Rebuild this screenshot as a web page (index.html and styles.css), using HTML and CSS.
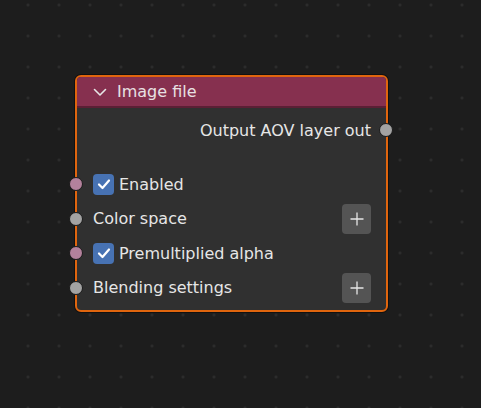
FILE: index.html
```html
<!DOCTYPE html>
<html>
<head>
<meta charset="utf-8">
<link rel="stylesheet" href="styles.css">
</head>
<body>
<div class="canvas">
  <div class="node">
    <div class="header">
      <svg class="chevron" width="14" height="9" viewBox="0 0 14 9"><path d="M1.5 1.5 L7 7 L12.5 1.5" fill="none" stroke="#e6e6e6" stroke-width="1.6" stroke-linecap="round" stroke-linejoin="round"/></svg>
      <span class="title">Image file</span>
    </div>
    <div class="body">
      <div class="row out">
        <span class="label">Output AOV layer out</span>
        <span class="socket right gray"></span>
      </div>
      <div class="spacer"></div>
      <div class="row">
        <span class="socket left pink"></span>
        <span class="check"><svg width="14" height="12" viewBox="0 0 14 12"><path d="M2 6.5 L5.5 10 L12 2.5" fill="none" stroke="#fff" stroke-width="2.2" stroke-linecap="round" stroke-linejoin="round"/></svg></span>
        <span class="label">Enabled</span>
      </div>
      <div class="row">
        <span class="socket left gray"></span>
        <span class="label">Color space</span>
        <span class="plus"><svg width="14" height="14" viewBox="0 0 14 14"><path d="M7 0.5 V13.5 M0.5 7 H13.5" stroke="#e6e6e6" stroke-width="1.3"/></svg></span>
      </div>
      <div class="row">
        <span class="socket left pink"></span>
        <span class="check"><svg width="14" height="12" viewBox="0 0 14 12"><path d="M2 6.5 L5.5 10 L12 2.5" fill="none" stroke="#fff" stroke-width="2.2" stroke-linecap="round" stroke-linejoin="round"/></svg></span>
        <span class="label">Premultiplied alpha</span>
      </div>
      <div class="row">
        <span class="socket left gray"></span>
        <span class="label">Blending settings</span>
        <span class="plus"><svg width="14" height="14" viewBox="0 0 14 14"><path d="M7 0.5 V13.5 M0.5 7 H13.5" stroke="#e6e6e6" stroke-width="1.3"/></svg></span>
      </div>
    </div>
  </div>
</div>
</body>
</html>
```

FILE: styles.css
```css
html, body {
  margin: 0;
  padding: 0;
}
body {
  width: 481px;
  height: 408px;
  overflow: hidden;
  background-color: #1d1d1d;
  background-image: radial-gradient(circle, #2f2f2f 0, #2f2f2f 1px, transparent 1.6px);
  background-size: 31px 31px;
  background-position: 12.5px -10.5px;
  font-family: "DejaVu Sans", "Liberation Sans", sans-serif;
  color: #e6e6e6;
}
.canvas {
  padding: 75px 0 0 75px;
}
.node {
  width: 309px;
  height: 233px;
  border: 2px solid #e0650e;
  border-radius: 6px;
  background: #303030;
  box-shadow: 0 0 0 1px #111;
  position: relative;
}
.header {
  height: 29px;
  background: #86304f;
  border-bottom: 2px solid #5b1f35;
  border-radius: 4px 4px 0 0;
  display: flex;
  align-items: center;
  padding-left: 16px;
  gap: 10px;
}
.chevron {
  margin-top: 1px;
}
.title {
  font-size: 16px;
  color: #e8e0e3;
}
.body {
  padding: 0 15px 0 16px;
}
.row {
  position: relative;
  height: 34.5px;
  display: flex;
  align-items: center;
  font-size: 16px;
}
.row.out {
  justify-content: flex-end;
  margin-top: 5px;
  height: 34px;
}
.spacer {
  height: 20px;
}
.label {
  white-space: nowrap;
}
.socket {
  position: absolute;
  top: 50%;
  width: 12px;
  height: 12px;
  margin-top: -7px;
  border-radius: 50%;
  border: 1px solid #1a1a1a;
}
.socket.left {
  left: -24px;
}
.socket.right {
  right: -22px;
}
.socket.gray {
  background: #a3a3a3;
}
.socket.pink {
  background: #b3819c;
}
.check {
  width: 21px;
  height: 21px;
  border-radius: 4px;
  background: #4772b3;
  display: flex;
  align-items: center;
  justify-content: center;
  margin-right: 5px;
}
.plus {
  margin-left: auto;
  width: 29px;
  height: 30px;
  border-radius: 4px;
  background: #545454;
  display: flex;
  align-items: center;
  justify-content: center;
}
```
